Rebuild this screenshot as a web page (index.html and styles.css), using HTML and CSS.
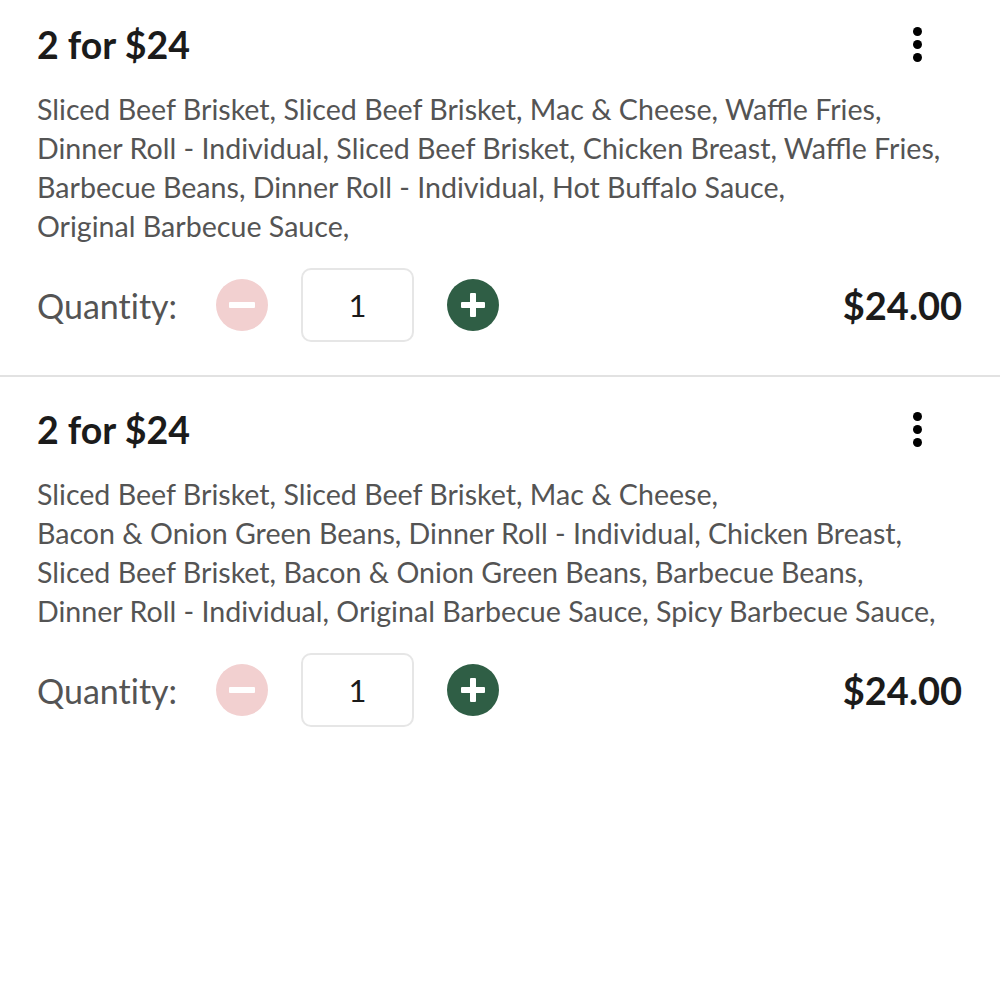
FILE: index.html
```html
<!DOCTYPE html>
<html lang="en">

<head>
    <meta charset="UTF-8">
    <meta name="viewport" content="width=device-width, initial-scale=1.0">
    <title>Cart</title>
    <link rel="stylesheet" href="styles.css">
</head>

<body>
    <div class="cart">
        <div class="item">
            <div class="item-head">
                <h2 class="item-title">2 for $24</h2>
                <button class="more-button" aria-label="More options">
                    <span class="dot"></span><span class="dot"></span><span class="dot"></span>
                </button>
            </div>
            <p class="item-desc">Sliced Beef Brisket, Sliced Beef Brisket, Mac &amp; Cheese, Waffle Fries,<br>
                Dinner Roll - Individual, Sliced Beef Brisket, Chicken Breast, Waffle Fries,<br>
                Barbecue Beans, Dinner Roll - Individual, Hot Buffalo Sauce,<br>
                Original Barbecue Sauce,</p>
            <div class="qty-row">
                <span class="qty-label">Quantity:</span>
                <button class="qty-btn minus" aria-label="Decrease">
                    <svg viewBox="0 0 52 52" width="52" height="52"><circle cx="26" cy="26" r="26" /><rect x="13" y="23" width="26" height="6" rx="1" fill="#fff" /></svg>
                </button>
                <input class="qty-input" type="text" value="1">
                <button class="qty-btn plus" aria-label="Increase">
                    <svg viewBox="0 0 52 52" width="52" height="52"><circle cx="26" cy="26" r="26" /><rect x="14" y="23" width="24" height="6" rx="1" fill="#fff" /><rect x="23" y="14" width="6" height="24" rx="1" fill="#fff" /></svg>
                </button>
                <span class="price">$24.00</span>
            </div>
        </div>

        <div class="item">
            <div class="item-head">
                <h2 class="item-title">2 for $24</h2>
                <button class="more-button" aria-label="More options">
                    <span class="dot"></span><span class="dot"></span><span class="dot"></span>
                </button>
            </div>
            <p class="item-desc">Sliced Beef Brisket, Sliced Beef Brisket, Mac &amp; Cheese,<br>
                Bacon &amp; Onion Green Beans, Dinner Roll - Individual, Chicken Breast,<br>
                Sliced Beef Brisket, Bacon &amp; Onion Green Beans, Barbecue Beans,<br>
                Dinner Roll - Individual, Original Barbecue Sauce, Spicy Barbecue Sauce,</p>
            <div class="qty-row">
                <span class="qty-label">Quantity:</span>
                <button class="qty-btn minus" aria-label="Decrease">
                    <svg viewBox="0 0 52 52" width="52" height="52"><circle cx="26" cy="26" r="26" /><rect x="13" y="23" width="26" height="6" rx="1" fill="#fff" /></svg>
                </button>
                <input class="qty-input" type="text" value="1">
                <button class="qty-btn plus" aria-label="Increase">
                    <svg viewBox="0 0 52 52" width="52" height="52"><circle cx="26" cy="26" r="26" /><rect x="14" y="23" width="24" height="6" rx="1" fill="#fff" /><rect x="23" y="14" width="6" height="24" rx="1" fill="#fff" /></svg>
                </button>
                <span class="price">$24.00</span>
            </div>
        </div>
    </div>
</body>

</html>
```

FILE: styles.css
```css
:root {
    --text-color: #1b1b1b;
    --muted-color: #545454;
    --line-color: #e2e2e2;
    --pink-color: #f2d0d0;
    --green-color: #2f5e45;
    --lato-font: 'Lato', 'Open Sans', sans-serif;
}

body {
    margin: 0;
    background: #ffffff;
    font-family: var(--lato-font);
    color: var(--text-color);
}

.cart {
    margin-top: -8px;
}

.item {
    padding: 26px 38px 33px 37px;
    border-bottom: 2px solid var(--line-color);
}

.item:last-child {
    border-bottom: none;
}

.item-head {
    display: flex;
    align-items: center;
    justify-content: space-between;
    height: 52px;
}

.item-title {
    margin: 0;
    font-size: 37.5px;
    font-weight: 700;
}

.more-button {
    display: flex;
    flex-direction: column;
    align-items: center;
    gap: 4px;
    padding: 0;
    margin-right: 40px;
    border: none;
    background: none;
}

.dot {
    width: 9px;
    height: 9px;
    border-radius: 50%;
    background: #000000;
}

.item-desc {
    margin: 20px 0 0;
    font-size: 28.6px;
    line-height: 39px;
    color: var(--muted-color);
    white-space: nowrap;
}

.qty-row {
    display: flex;
    align-items: center;
    margin-top: 22px;
    height: 74px;
}

.qty-label {
    font-size: 34px;
    color: var(--muted-color);
    font-variant-ligatures: no-common-ligatures;
    width: 179px;
}

.qty-btn {
    padding: 0;
    border: none;
    background: none;
    display: flex;
}

.minus svg {
    fill: var(--pink-color);
}

.plus svg {
    fill: var(--green-color);
}

.qty-input {
    box-sizing: border-box;
    width: 113px;
    height: 74px;
    margin: 0 33px;
    border: 2px solid #e6e6e6;
    border-radius: 10px;
    text-align: center;
    font-family: var(--lato-font);
    font-size: 31px;
    color: var(--text-color);
}

.price {
    margin-left: auto;
    font-size: 38px;
    font-weight: 700;
}
```
